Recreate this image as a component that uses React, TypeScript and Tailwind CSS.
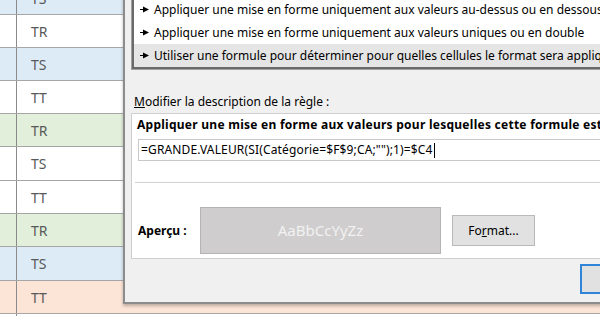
import React from "react";

const rows: { bg: string; t: string; h: number }[] = [
  { bg: "bg-[#ddebf7]", t: "TS", h: 33 },
  { bg: "bg-white", t: "TR", h: 33 },
  { bg: "bg-[#ddebf7]", t: "TS", h: 33 },
  { bg: "bg-white", t: "TT", h: 33 },
  { bg: "bg-[#e2efda]", t: "TR", h: 33 },
  { bg: "bg-white", t: "TS", h: 34 },
  { bg: "bg-white", t: "TT", h: 33 },
  { bg: "bg-[#e2efda]", t: "TR", h: 33 },
  { bg: "bg-[#ddebf7]", t: "TS", h: 34 },
  { bg: "bg-[#fce4d6]", t: "TT", h: 33 },
  { bg: "bg-white", t: "", h: 33 },
];

function Arrow() {
  return (
    <svg width="9" height="7" viewBox="0 0 9 7" className="shrink-0">
      <rect x="0" y="3" width="4" height="1" fill="#000" />
      <polygon points="3,0.5 9,3.5 3,6.5" fill="#000" />
    </svg>
  );
}

export default function App() {
  const font = { fontFamily: '"Noto Sans", "Open Sans", sans-serif' };
  return (
    <div className="relative w-[600px] h-[316px] overflow-hidden bg-white" style={font}>
      {/* spreadsheet */}
      <div className="flex flex-col mt-[-18px]">
        {rows.map((r, i) => (
          <div key={i} className={`flex ${r.bg} border-b border-[#a6a6a6]`} style={{ height: r.h }}>
            <div className="w-[17px] border-r border-[#8a8a8a]" />
            <div className="flex-1 flex items-center pl-[14px] text-[14px] text-[#595959]">{r.t}</div>
          </div>
        ))}
      </div>

      {/* dialog */}
      <div className="absolute left-[123px] top-[-20px] w-[520px] h-[324px] bg-[#f0f0f0] border-l-2 border-b-2 border-[#8c8c8c] shadow-[0_2px_3px_rgba(0,0,0,0.25)] text-black text-[12px]">
        <div className="flex flex-col pl-[6px]">
          {/* listbox */}
          <div className="border border-[#a0a0a0] mt-[-1px]">
            <div className="border-l-2 border-b-2 border-[#6a6a6a] bg-white flex flex-col pt-[18px]">
              <div className="h-[23px] flex items-center gap-[5px] pl-[6px] whitespace-nowrap">
                <Arrow />
                <span>Appliquer une mise en forme uniquement aux valeurs au-dessus ou en dessous de la moyenne</span>
              </div>
              <div className="h-[23px] flex items-center gap-[5px] pl-[6px] whitespace-nowrap">
                <Arrow />
                <span>Appliquer une mise en forme uniquement aux valeurs uniques ou en double</span>
              </div>
              <div className="h-[23px] flex items-center gap-[5px] pl-[6px] whitespace-nowrap bg-[#e5e5e5]">
                <Arrow />
                <span>Utiliser une formule pour déterminer pour quelles cellules le format sera appliqué</span>
              </div>
            </div>
          </div>

          <div className="mt-[23px] pl-[3px] h-[18px] flex items-center whitespace-nowrap">
            <span><span className="underline">M</span>odifier la description de la règle :</span>
          </div>

          {/* description panel */}
          <div className="mt-[2px] h-[146px] bg-white border border-[#cfcfcf] flex flex-col">
            <div className="h-[20px] flex items-end pl-[5px] font-bold whitespace-nowrap tracking-[0.26px]">
              Appliquer une mise en forme aux valeurs pour lesquelles cette formule est vraie :
            </div>
            <div className="ml-[6px] mt-[5px] h-[22px] border border-[#c8c8c8] flex items-center pl-[2px] whitespace-nowrap tracking-[0.15px]">
              <span>=GRANDE.VALEUR(SI(Catégorie=$F$9;CA;&quot;&quot;);1)=$C4</span>
              <span className="inline-block w-px h-[15px] bg-black ml-[1px]" />
            </div>
            <div className="ml-[3px] mt-[21px] border-t border-[#d0d0d0]" />
            <div className="flex items-center mt-[24px] pl-[6px]">
              <div className="w-[62px] font-bold">Aperçu :</div>
              <div className="w-[241px] h-[47px] bg-[#cfcdcd] border border-[#b4b4b4] flex items-center justify-center text-[15px] text-[#f2f2f2]">
                AaBbCcYyZz
              </div>
              <div className="ml-[11px] w-[83px] h-[31px] bg-[#e1e1e1] border border-[#b9b9b9] flex items-center justify-center">
                <span>Fo<span className="underline">r</span>mat...</span>
              </div>
            </div>
          </div>

          <div className="flex mt-[5px]">
            <div className="ml-[449px] w-[80px] h-[30px] bg-[#e1e1e1] border-2 border-[#2f86d8]" />
          </div>
        </div>
      </div>
    </div>
  );
}
